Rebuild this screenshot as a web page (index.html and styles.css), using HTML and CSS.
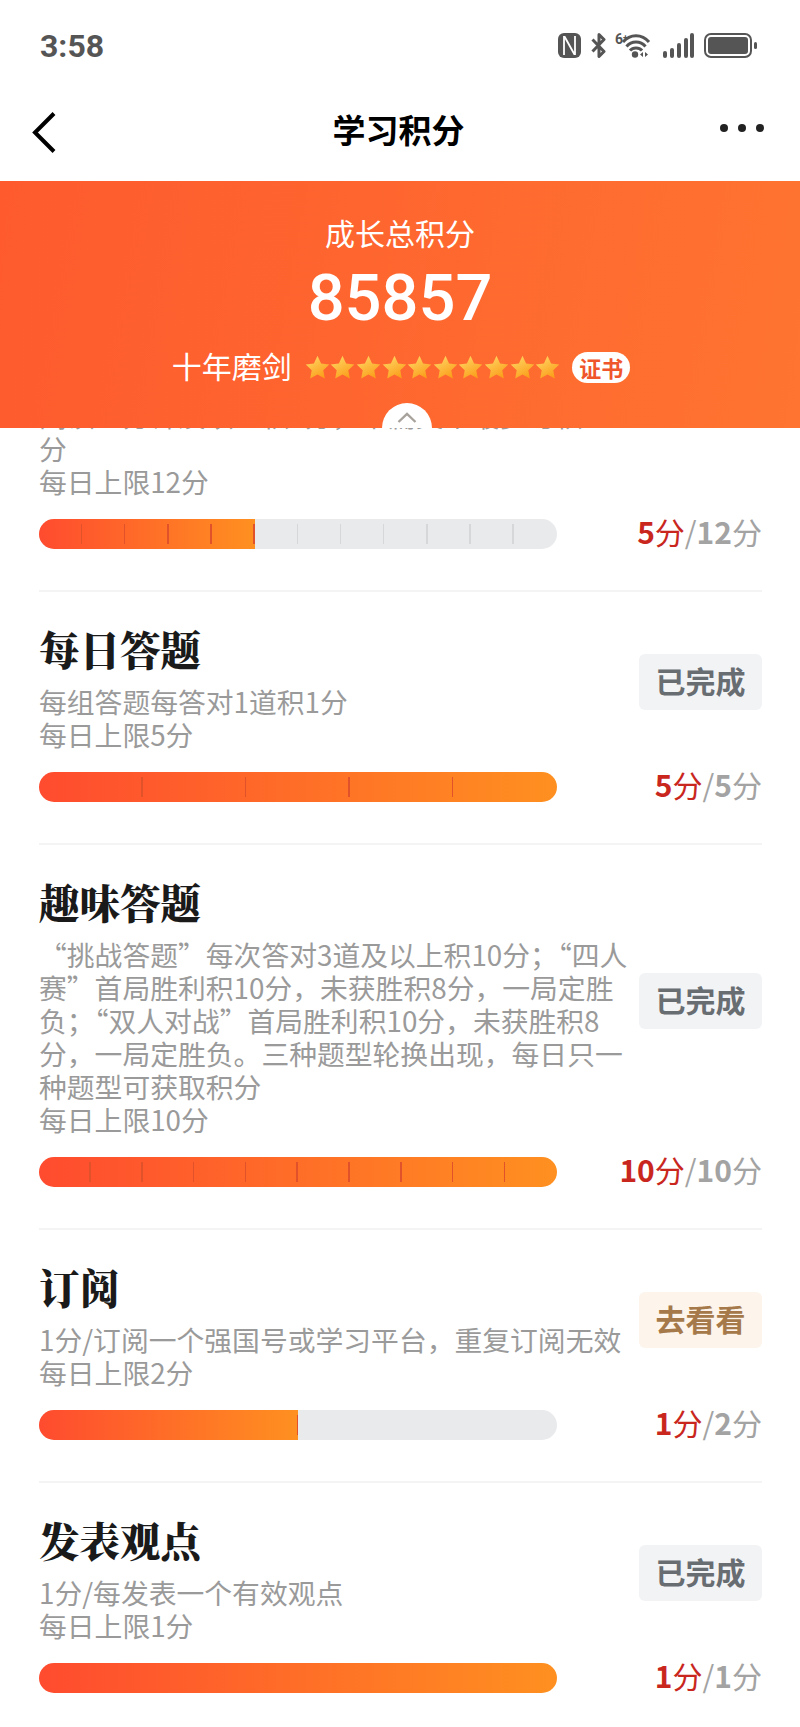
FILE: index.html
```html
<!DOCTYPE html>
<html lang="zh-CN">
<head>
    <meta charset="UTF-8">
    <title>学习积分</title>
    <link rel="stylesheet" href="styles.css">
</head>
<body>

<svg class="defs" width="0" height="0">
    <defs>
        <linearGradient id="starFill" x1="0" y1="0" x2="0.6" y2="1">
            <stop offset="0" stop-color="#ffdc6a"/>
            <stop offset="1" stop-color="#fb9f1c"/>
        </linearGradient>
        <symbol id="star" viewBox="0 0 25 24">
            <path d="M12.5 .8l3.6 7.6 8.2 1.1-6 5.8 1.5 8.2-7.3-4-7.3 4 1.5-8.2-6-5.8 8.2-1.1z" fill="url(#starFill)"/>
        </symbol>
    </defs>
</svg>

<div class="status">
    <div class="time">3:58</div>
    <div class="status-icons">
        <svg class="icon-nfc" viewBox="0 0 23 25">
            <rect width="23" height="25" rx="6" fill="#555"/>
            <path d="M6 3v19M17 3v19M6.500 3.500l10 18" fill="none" stroke="#fff" stroke-width="1.800"/>
        </svg>
        <svg class="icon-bt" viewBox="0 0 15 25">
            <path d="M1.500 6.500l11.500 12-5 5V1.500l5 5-11.500 12" fill="none" stroke="#555" stroke-width="3" stroke-linejoin="round"/>
        </svg>
        <svg class="icon-wifi" viewBox="0 0 35 25">
            <text x="0" y="11" class="wifi-six">6<tspan class="wifi-plus" dy="-3">+</tspan></text>
            <path d="M8 9C15 .5 27 .5 34 9M11.500 13.500C16.500 7.500 25.500 7.500 30.500 13.500M15 17.500C18 14 24 14 27 17.500" fill="none" stroke="#555" stroke-width="3"/>
            <circle cx="20" cy="21.500" r="3.200" fill="#555"/>
            <path d="M28 19v5l-3-2.500zM30 19v5l3-2.500z" fill="#555"/>
        </svg>
        <svg class="icon-signal" viewBox="0 0 31 25">
            <rect x="0" y="18" width="4" height="7" rx="2" fill="#555"/>
            <rect x="7" y="15" width="4" height="10" rx="2" fill="#555"/>
            <rect x="14" y="10" width="4" height="15" rx="2" fill="#555"/>
            <rect x="21" y="5" width="4" height="20" rx="2" fill="#555"/>
            <rect x="27" y="0" width="4" height="25" rx="2" fill="#555"/>
        </svg>
        <svg class="icon-battery" viewBox="0 0 53 25">
            <rect x="1" y="1" width="46" height="23" rx="6" fill="none" stroke="#555" stroke-width="2"/>
            <rect x="4" y="4" width="40" height="17" rx="3" fill="#555"/>
            <rect x="50" y="9" width="3" height="7" rx="1.500" fill="#555"/>
        </svg>
    </div>
</div>

<div class="nav">
    <svg class="back" viewBox="0 0 24 42">
        <path d="M22 2.500L3 21.500l19 19" fill="none" stroke="#000" stroke-width="4"/>
    </svg>
    <div class="nav-title">学习积分</div>
    <div class="more"><i></i><i></i><i></i></div>
</div>

<div class="banner">
    <div class="total-label">成长总积分</div>
    <div class="total-value">85857</div>
    <div class="rank">
        <span class="rank-name">十年磨剑</span>
        <span class="stars">
            <svg class="star"><use href="#star"/></svg>
            <svg class="star"><use href="#star"/></svg>
            <svg class="star"><use href="#star"/></svg>
            <svg class="star"><use href="#star"/></svg>
            <svg class="star"><use href="#star"/></svg>
            <svg class="star"><use href="#star"/></svg>
            <svg class="star"><use href="#star"/></svg>
            <svg class="star"><use href="#star"/></svg>
            <svg class="star"><use href="#star"/></svg>
            <svg class="star"><use href="#star"/></svg>
        </span>
        <span class="cert">证书</span>
    </div>
    <div class="collapse">
        <svg viewBox="0 0 20 11"><path d="M1.500 10L10 2l8.500 8" fill="none" stroke="#a8a29c" stroke-width="2.400"/></svg>
    </div>
</div>

<div class="list">

    <div class="item">
        <div class="head">
            <div class="text">
                <div class="title">我要选读文章</div>
                <div class="desc">每有效阅读一篇文章积1分，上限6分；有效<br>阅读文章累计1分钟积1分，上限6分；累计<br>阅读一分钟及以上积1分，单篇文章最多可积1<br>分<br>每日上限12分</div>
            </div>
        </div>
        <div class="progress">
            <div class="bar">
                <div class="fill" style="width: 41.67%"></div>
                <div class="ticks">
                    <span class="on"></span><span class="on"></span><span class="on"></span><span class="on"></span><span class="on"></span>
                    <span></span><span></span><span></span><span></span><span></span><span></span><span></span>
                </div>
            </div>
            <div class="score"><b class="got">5</b><span class="got">分</span>/<b>12</b>分</div>
        </div>
    </div>

    <div class="item">
        <div class="head">
            <div class="text">
                <div class="title">每日答题</div>
                <div class="desc">每组答题每答对1道积1分<br>每日上限5分</div>
            </div>
            <div class="action">已完成</div>
        </div>
        <div class="progress">
            <div class="bar">
                <div class="fill" style="width: 100%"></div>
                <div class="ticks">
                    <span class="on"></span><span class="on"></span><span class="on"></span><span class="on"></span><span class="on"></span>
                </div>
            </div>
            <div class="score"><b class="got">5</b><span class="got">分</span>/<b>5</b>分</div>
        </div>
    </div>

    <div class="item">
        <div class="head">
            <div class="text">
                <div class="title">趣味答题</div>
                <div class="desc">“挑战答题”每次答对3道及以上积10分；“四人赛”首局胜利积10分，未获胜积8分，一局定胜负；“双人对战”首局胜利积10分，未获胜积8分，一局定胜负。三种题型轮换出现，每日只一种题型可获取积分<br>每日上限10分</div>
            </div>
            <div class="action">已完成</div>
        </div>
        <div class="progress">
            <div class="bar">
                <div class="fill" style="width: 100%"></div>
                <div class="ticks">
                    <span class="on"></span><span class="on"></span><span class="on"></span><span class="on"></span><span class="on"></span>
                    <span class="on"></span><span class="on"></span><span class="on"></span><span class="on"></span><span class="on"></span>
                </div>
            </div>
            <div class="score"><b class="got">10</b><span class="got">分</span>/<b>10</b>分</div>
        </div>
    </div>

    <div class="item">
        <div class="head">
            <div class="text">
                <div class="title">订阅</div>
                <div class="desc">1分/订阅一个强国号或学习平台，重复订阅无效<br>每日上限2分</div>
            </div>
            <div class="action go">去看看</div>
        </div>
        <div class="progress">
            <div class="bar">
                <div class="fill" style="width: 50%"></div>
                <div class="ticks">
                    <span class="on"></span><span></span>
                </div>
            </div>
            <div class="score"><b class="got">1</b><span class="got">分</span>/<b>2</b>分</div>
        </div>
    </div>

    <div class="item">
        <div class="head">
            <div class="text">
                <div class="title">发表观点</div>
                <div class="desc">1分/每发表一个有效观点<br>每日上限1分</div>
            </div>
            <div class="action">已完成</div>
        </div>
        <div class="progress">
            <div class="bar">
                <div class="fill" style="width: 100%"></div>
            </div>
            <div class="score"><b class="got">1</b><span class="got">分</span>/<b>1</b>分</div>
        </div>
    </div>

</div>

</body>
</html>
```

FILE: styles.css
```css
html, body {
    margin: 0;
    padding: 0;
    height: 1727px;
    overflow: hidden;
    background-color: #fff;
    font-family: "Noto Sans CJK SC", "Noto Sans", sans-serif;
}
.defs {
    display: block;
    height: 0;
}
.status {
    height: 82px;
    box-sizing: border-box;
    padding: 33px 43px 0 40px;
    display: flex;
    justify-content: space-between;
    align-items: flex-start;
}
.time {
    font-family: Roboto, sans-serif;
    font-weight: 700;
    font-size: 32px;
    line-height: 27px;
    color: #555;
}
.status-icons {
    display: flex;
    align-items: flex-start;
}
.status-icons svg {
    height: 25px;
    display: block;
}
.icon-nfc {
    width: 23px;
}
.icon-bt {
    width: 15px;
    margin-left: 10px;
}
.icon-wifi {
    width: 35px;
    margin-left: 9px;
    overflow: visible;
}
.wifi-six {
    font-family: Roboto, sans-serif;
    font-size: 14px;
    font-weight: 700;
    fill: #555;
}
.wifi-plus {
    font-size: 9px;
}
.icon-signal {
    width: 31px;
    margin-left: 13px;
}
.icon-battery {
    width: 53px;
    margin-left: 10px;
}
.nav {
    height: 99px;
    padding: 0 36px 0 32px;
    display: flex;
    align-items: center;
    justify-content: space-between;
}
.back {
    width: 24px;
    height: 42px;
}
.nav-title {
    font-size: 33px;
    font-weight: 700;
    color: #000;
    margin: 0 0 6px 21px;
}
.more {
    display: flex;
    gap: 10px;
    width: 44px;
    margin-bottom: 7px;
}
.more i {
    width: 8px;
    height: 8px;
    border-radius: 50%;
    background-color: #222;
}
.banner {
    position: relative;
    z-index: 2;
    height: 247px;
    box-sizing: border-box;
    padding-top: 31px;
    overflow: hidden;
    color: #fff;
    text-align: center;
    background: linear-gradient(100deg, #fe5a2e, #ff7430);
}
.total-label {
    font-size: 30px;
    line-height: 40px;
}
.total-value {
    font-family: Roboto, sans-serif;
    font-weight: 500;
    font-size: 65px;
    line-height: 72px;
    margin-top: 10px;
}
.rank {
    display: flex;
    justify-content: center;
    align-items: center;
    margin-top: 17px;
    height: 32px;
}
.rank-name {
    font-size: 30px;
    line-height: 32px;
    margin: 0 0 5px 2px;
}
.stars {
    display: flex;
    gap: 0.6px;
    margin-left: 13px;
}
.star {
    width: 25px;
    height: 24px;
    display: block;
}
.cert {
    margin-left: 12px;
    width: 58px;
    height: 31px;
    border-radius: 16px;
    background-color: #fff;
    color: #f0562c;
    font-size: 22px;
    font-weight: 700;
    line-height: 31px;
}
.collapse {
    position: absolute;
    left: 382px;
    bottom: -25px;
    width: 50px;
    height: 50px;
    border-radius: 50%;
    background-color: #fff;
}
.collapse svg {
    position: absolute;
    left: 15px;
    top: 9px;
    width: 20px;
    height: 11px;
}
.list {
    margin-top: -188px;
    padding: 0 38px 0 39px;
}
.item {
    padding: 33px 0 41px;
    border-bottom: 2px solid #f4f4f5;
}
.head {
    display: flex;
    align-items: center;
    gap: 11px;
}
.text {
    flex: 1;
    min-width: 0;
}
.title {
    font-family: "Noto Serif CJK SC", "Liberation Serif", serif;
    font-weight: 900;
    font-size: 40.5px;
    line-height: 48px;
    color: #1a1a1a;
}
.desc {
    font-size: 27.8px;
    line-height: 33px;
    color: #9a9a9a;
    margin-top: 12px;
}
.action {
    flex: none;
    width: 123px;
    height: 56px;
    margin-bottom: 12px;
    border-radius: 6px;
    background-color: #f2f3f5;
    color: #686d72;
    font-size: 30px;
    font-weight: 700;
    line-height: 52px;
    text-align: center;
}
.action.go {
    background-color: #fdf4ec;
    color: #a5794a;
}
.progress {
    display: flex;
    align-items: center;
    justify-content: space-between;
    margin-top: 21px;
}
.bar {
    position: relative;
    width: 518px;
    height: 30px;
    border-radius: 15px;
    overflow: hidden;
    background-color: #e9eaec;
}
.fill {
    height: 100%;
    background: linear-gradient(90deg, #ff4b2f, #ff9020);
}
.ticks {
    position: absolute;
    top: 0;
    left: 0;
    width: 100%;
    height: 100%;
    display: flex;
}
.ticks span {
    flex: 1;
    display: flex;
    justify-content: flex-end;
    align-items: center;
}
.ticks span::after {
    content: "";
    width: 1.5px;
    height: 20px;
    background-color: #d6d7d9;
}
.ticks span.on::after {
    background-color: #e2522a;
}
.ticks span:last-child::after {
    display: none;
}
.score {
    font-size: 30px;
    line-height: 20px;
    color: #a3a3a3;
    margin-bottom: 6px;
}
.score b {
    font-weight: 700;
}
.score .got {
    color: #c9271e;
}
```
